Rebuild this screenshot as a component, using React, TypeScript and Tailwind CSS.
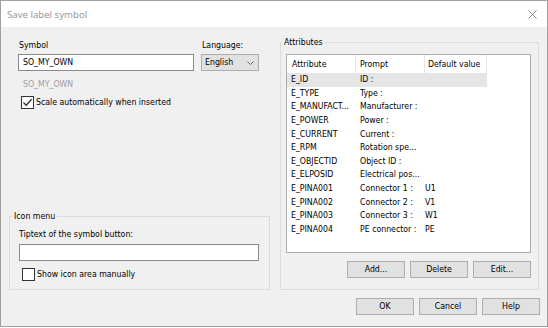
import React from "react";

const rows: [string, string, string][] = [
  ["E_ID", "ID :", ""],
  ["E_TYPE", "Type :", ""],
  ["E_MANUFACT...", "Manufacturer :", ""],
  ["E_POWER", "Power :", ""],
  ["E_CURRENT", "Current :", ""],
  ["E_RPM", "Rotation spe...", ""],
  ["E_OBJECTID", "Object ID :", ""],
  ["E_ELPOSID", "Electrical pos...", ""],
  ["E_PINA001", "Connector 1 :", "U1"],
  ["E_PINA002", "Connector 2 :", "V1"],
  ["E_PINA003", "Connector 3 :", "W1"],
  ["E_PINA004", "PE connector :", "PE"],
];

function Btn({ label }: { label: string }) {
  return (
    <div className="w-[58px] h-full bg-[#e1e1e1] border border-[#adadad] flex items-center justify-center">
      {label}
    </div>
  );
}

function Check({ checked }: { checked?: boolean }) {
  return (
    <div className="w-[13px] h-[13px] border border-[#333] bg-white flex items-center justify-center">
      {checked && (
        <svg width="11" height="11" viewBox="0 0 11 11">
          <path d="M1.5 5.5 L4.2 8.3 L9.6 2.2" fill="none" stroke="#333" strokeWidth="1.3" />
        </svg>
      )}
    </div>
  );
}

export default function App() {
  return (
    <div className="w-[548px] h-[328px] bg-white overflow-hidden font-['DejaVu_Sans_Condensed','DejaVu_Sans',sans-serif] text-[8.7px] text-black leading-[13px]">
      <div className="w-[548px] h-[327px] border border-[#a0a0a0] bg-[#f0f0f0] flex flex-col">
        <div className="h-[26px] bg-white flex items-center justify-between pl-[6px] pr-[10px]">
          <span className="font-['Noto_Sans',sans-serif] text-[9.6px] text-[#999]">Save label symbol</span>
          <svg width="9" height="9" viewBox="0 0 9 9">
            <path d="M0.5 0.5 L8.5 8.5 M8.5 0.5 L0.5 8.5" stroke="#8a8a8a" strokeWidth="1" />
          </svg>
        </div>
        <div className="flex-1 flex flex-col">
          <div className="flex pt-[11px] h-[263px]">
            {/* left column */}
            <div className="ml-[8px] w-[261px] pt-[1px] flex flex-col">
              <div className="pl-[9px] flex">
                <div className="w-[176px] flex flex-col">
                  <div className="h-[13px] pl-[1px]">Symbol</div>
                  <div className="mt-[2px] h-[17px] bg-white border border-[#8a8a8a] pl-[4px] flex items-center">SO_MY_OWN</div>
                </div>
                <div className="ml-[7px] w-[58px] flex flex-col">
                  <div className="h-[13px] pl-[1px]">Language:</div>
                  <div className="mt-[2px] h-[17px] bg-[#e1e1e1] border border-[#adadad] pl-[3px] pr-[4px] flex items-center justify-between">
                    <span>English</span>
                    <svg width="7" height="4" viewBox="0 0 7 4">
                      <path d="M0.5 0.5 L3.5 3.5 L6.5 0.5" fill="none" stroke="#666" strokeWidth="1" />
                    </svg>
                  </div>
                </div>
              </div>
              <div className="pl-[14px] mt-[7px] h-[13px] text-[#a0a0a0]">SO_MY_OWN</div>
              <div className="pl-[12px] mt-[5px] flex items-center gap-[2px]">
                <Check checked />
                <span>Scale automatically when inserted</span>
              </div>
              {/* Icon menu group */}
              <div className="mt-auto h-[74px] border border-[#dcdcdc] relative flex flex-col pl-[9px] pr-[10px]">
                <span className="absolute left-[2px] top-[-7px] px-[2px] bg-[#f0f0f0]">Icon menu</span>
                <div className="mt-[11px] h-[13px]">Tiptext of the symbol button:</div>
                <div className="mt-[3px] h-[17px] bg-white border border-[#8a8a8a]"></div>
                <div className="mt-[7px] pl-[3px] flex items-center gap-[2px]">
                  <Check />
                  <span>Show icon area manually</span>
                </div>
              </div>
            </div>
            {/* right column */}
            <div className="ml-[10px] w-[259px] mt-[4px] border border-[#dcdcdc] relative flex flex-col pl-[5px] pr-[7px] pt-[11px]">
              <span className="absolute left-[1px] top-[-7px] px-[2px] bg-[#f0f0f0]">Attributes</span>
              <div className="h-[199px] bg-white border border-[#adadad] flex flex-col">
                <div className="h-[18px] flex items-center">
                  <div className="w-[69px] h-full pl-[5px] flex items-center border-r border-[#e5e5e5]">Attribute</div>
                  <div className="w-[69px] h-full pl-[4px] flex items-center border-r border-[#e5e5e5]">Prompt</div>
                  <div className="w-[62px] h-full pl-[3px] flex items-center border-r border-[#e5e5e5]">Default value</div>
                </div>
                {rows.map((r, i) => (
                  <div key={i} className={`w-[200px] h-[13.6px] flex items-center ${i === 0 ? "bg-[#e5e5e5]" : ""}`}>
                    <div className="w-[69px] pl-[4px] whitespace-nowrap">{r[0]}</div>
                    <div className="w-[69px] pl-[4px] whitespace-nowrap">{r[1]}</div>
                    <div className="w-[62px] pl-[0px] whitespace-nowrap">{r[2]}</div>
                  </div>
                ))}
              </div>
              <div className="mt-[8px] h-[17px] flex justify-end gap-[5px]">
                <Btn label="Add..." />
                <Btn label="Delete" />
                <Btn label="Edit..." />
              </div>
            </div>
          </div>
          <div className="mt-[8px] h-[17px] flex justify-end gap-[5px] pr-[7px]">
            <Btn label="OK" />
            <Btn label="Cancel" />
            <Btn label="Help" />
          </div>
        </div>
      </div>
    </div>
  );
}
